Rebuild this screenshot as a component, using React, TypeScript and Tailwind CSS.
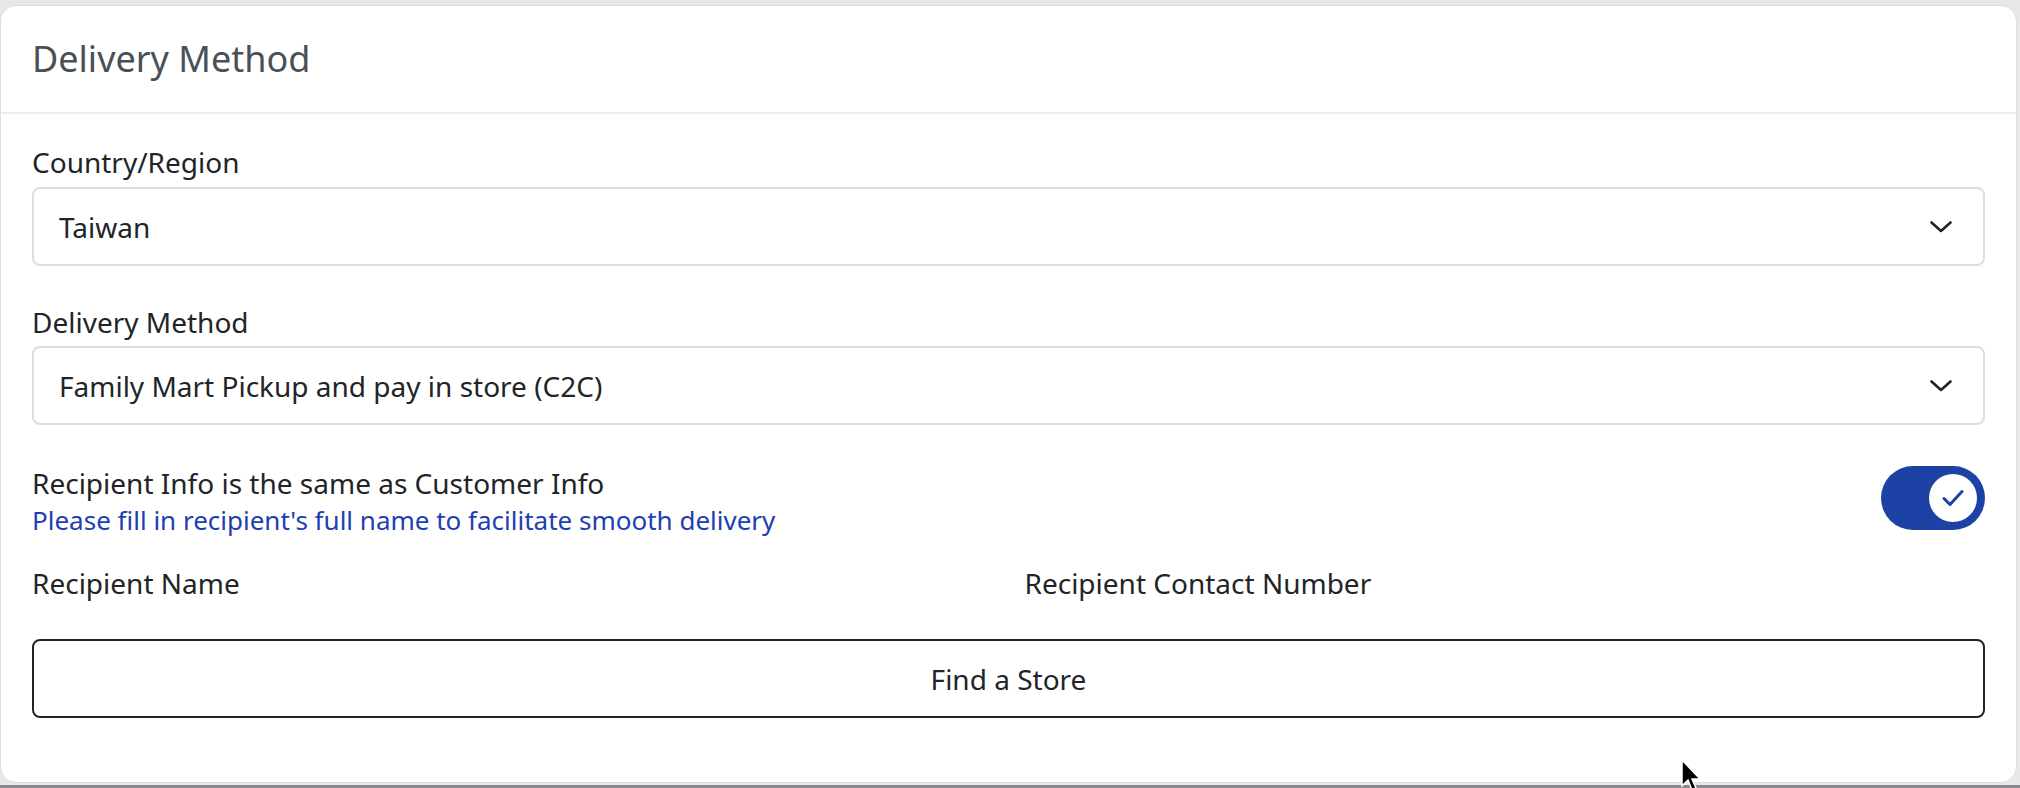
function Chevron() {
  return (
    <svg width="22" height="12" viewBox="0 0 22 12" fill="none" className="shrink-0">
      <path d="M1.5 1.5 L11 10 L20.5 1.5" stroke="#212529" strokeWidth="2.6" strokeLinecap="round" strokeLinejoin="round" />
    </svg>
  );
}

function SelectBox({ value }: { value: string }) {
  return (
    <div className="flex items-center justify-between h-[79px] rounded-[8px] border-2 border-[#dcdde2] pl-[25px] pr-[31px]">
      <span className="text-[28px] text-[#212529]">{value}</span>
      <Chevron />
    </div>
  );
}

export default function App() {
  return (
    <div
      className="relative w-[2020px] h-[788px] bg-[#e8e8ea] pt-[5px] pr-[3px] overflow-hidden"
      style={{ fontFamily: '"Noto Sans", "Open Sans", sans-serif' }}
    >
      <div className="h-[778px] bg-white rounded-[16px] border border-[#dcdde2]">
        {/* Header */}
        <div className="h-[108px] flex items-center px-[31px] border-b-2 border-[#ebebf0]">
          <h2 className="text-[36px] text-[#495057]">Delivery Method</h2>
        </div>

        {/* Body */}
        <div className="px-[31px] pt-[30px]">
          <div className="text-[28px] leading-[36px] text-[#212529] mb-[7px]">Country/Region</div>
          <SelectBox value="Taiwan" />

          <div className="text-[28px] leading-[36px] text-[#212529] mt-[38px] mb-[6px]">Delivery Method</div>
          <SelectBox value="Family Mart Pickup and pay in store (C2C)" />

          <div className="flex items-start justify-between mt-[40px]">
            <div>
              <div className="text-[28px] leading-[36px] text-[#212529]">Recipient Info is the same as Customer Info</div>
              <div className="text-[26px] leading-[38px] text-[#1e40af]">
                Please fill in recipient's full name to facilitate smooth delivery
              </div>
            </div>
            <div className="mt-[1px] flex items-center justify-end w-[104px] h-[64px] rounded-full bg-[#1d42a6] pr-[8px]">
              <div className="w-[48px] h-[48px] rounded-full bg-white flex items-center justify-center">
                <svg width="22" height="18" viewBox="0 0 22 18" fill="none">
                  <path d="M2 9.5 L8 15.5 L20 2.5" stroke="#1d42a6" strokeWidth="3" strokeLinecap="round" strokeLinejoin="round" />
                </svg>
              </div>
            </div>
          </div>

          <div className="grid grid-cols-2 gap-8 mt-[26px]">
            <div className="text-[28px] leading-[36px] text-[#212529]">Recipient Name</div>
            <div className="text-[28px] leading-[36px] text-[#212529]">Recipient Contact Number</div>
          </div>

          <button className="mt-[38px] w-full h-[79px] rounded-[8px] border-2 border-[#212529] text-[28px] text-[#212529] bg-white">
            Find a Store
          </button>
        </div>
      </div>

      {/* bottom edge */}
      <div className="absolute left-0 right-0 bottom-0 h-[3px] bg-[#8a8a8e]" />

      {/* mouse cursor */}
      <svg className="absolute left-[1680px] top-[758px]" width="22" height="34" viewBox="0 0 22 34">
        <path d="M2 2 L2 28 L8 22 L12 32 L16 30 L12 21 L20 21 Z" fill="#000" stroke="#fff" strokeWidth="1.5" />
      </svg>
    </div>
  );
}
